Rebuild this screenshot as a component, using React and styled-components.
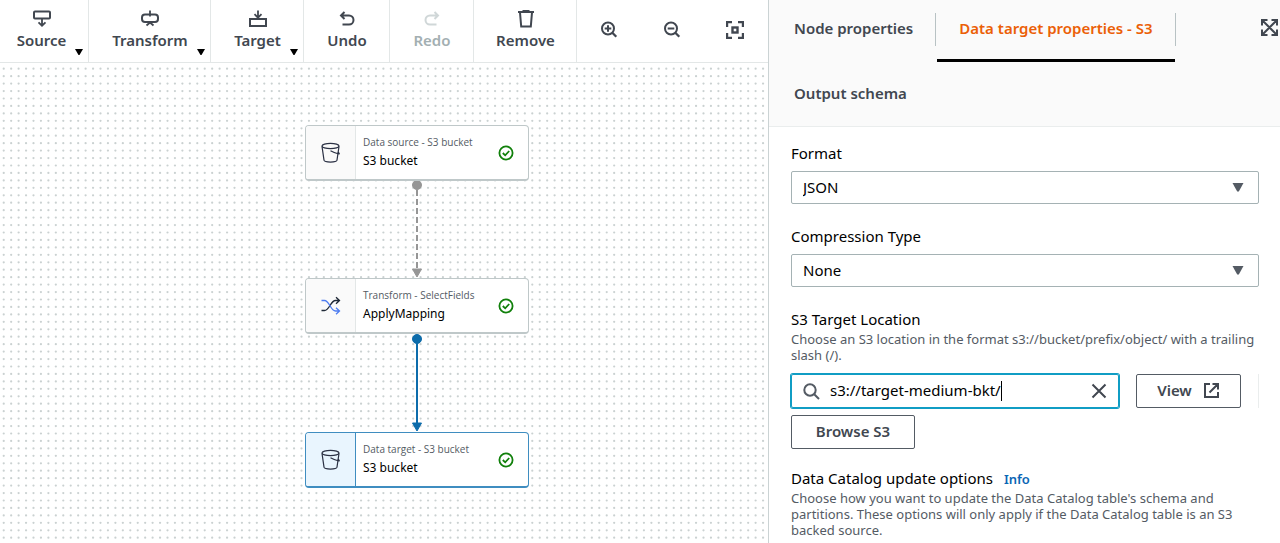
import React from "react";
import styled, { createGlobalStyle, css } from "styled-components";

const GlobalStyle = createGlobalStyle`
  * { box-sizing: border-box; }
  body {
    margin: 0;
    background: #fff;
    color: #16191f;
    font-family: "Noto Sans", "Open Sans", sans-serif;
    font-size: 15px;
    line-height: 20px;
  }
  button, input, select { font: inherit; color: inherit; }
`;

const Page = styled.div`
  display: grid;
  grid-template-columns: 3fr 2fr;
  min-height: 100vh;
`;

/* ---------- Graph side ---------- */

const GraphPane = styled.main`
  display: flex;
  flex-direction: column;
  min-width: 0;
`;

const Toolbar = styled.div`
  display: flex;
  height: 63px;
  border-bottom: 1px solid #e3e7e7;
`;

const ToolButton = styled.button`
  position: relative;
  display: flex;
  flex-direction: column;
  align-items: center;
  gap: 1px;
  width: ${(p) => p.$width}px;
  padding: 9px 0 0 ${(p) => (p.$first ? 0 : 1)}px;
  ${(p) => p.$first && css`padding-right: 5px;`}
  border: 0;
  border-right: 1px solid #e3e7e7;
  background: none;
  color: #414750;
  font-weight: 600;
  &:disabled { color: #a3afb2; }
  &:disabled svg { color: #d0d7d8; }
`;

const MenuCaret = styled.svg`
  position: absolute;
  right: 5px;
  bottom: 7px;
  fill: #000;
`;

const ZoomButton = styled.button`
  display: grid;
  place-items: center;
  width: 63px;
  padding: 0 0 2px;
  border: 0;
  background: none;
  color: #414750;
`;

const Canvas = styled.div`
  position: relative;
  flex: 1;
  overflow: hidden;
`;

const CanvasDrawing = styled.svg`
  position: absolute;
  inset: 0;
  width: 100%;
  height: 100%;
`;

const NodeCard = styled.div`
  position: absolute;
  left: 305px;
  top: ${(p) => p.$top}px;
  display: flex;
  align-items: stretch;
  width: 224px;
  height: 56px;
  overflow: hidden;
  border: 1px solid ${(p) => (p.$selected ? "#3f8dc0" : "#bfc8c9")};
  border-bottom-width: 2px;
  border-radius: 4px;
  background: #fff;
`;

const NodeIcon = styled.div`
  display: grid;
  place-items: center;
  width: 50px;
  border-right: 1px solid ${(p) => (p.$selected ? "#3f8dc0" : "#e3e7e7")};
  background: ${(p) => (p.$selected ? "#e9f5fe" : "#fafafa")};
`;

const NodeText = styled.div`
  display: flex;
  flex: 1;
  flex-direction: column;
  gap: 3px;
  padding: 8px 0 0 7px;
  white-space: nowrap;
`;

const NodeKind = styled.div`
  color: #545b64;
  font-family: "Open Sans", "Noto Sans", sans-serif;
  font-size: 10px;
  line-height: 16px;
`;

const NodeName = styled.div`
  color: #000;
  font-size: 12px;
  line-height: 16px;
`;

const NodeStatus = styled.div`
  display: grid;
  place-items: center;
  padding-right: 14px;
`;

/* ---------- Properties side ---------- */

const PropertiesPane = styled.aside`
  min-width: 0;
  border-left: 1px solid #cbd3d4;
`;

const TabHeader = styled.div`
  display: flex;
  height: 127px;
  border-bottom: 1px solid #eaeded;
  background: #fafafa;
`;

const TabList = styled.div`
  display: flex;
  flex: 1;
  flex-wrap: wrap;
  align-content: flex-start;
  row-gap: 3px;
  padding-left: 3px;
`;

const Tab = styled.button`
  position: relative;
  height: 62px;
  margin-right: 2px;
  padding: 0 22px 3px;
  border: 0;
  border-bottom: 3px solid ${(p) => (p.$active ? "#000" : "transparent")};
  background: none;
  color: ${(p) => (p.$active ? "#eb5f07" : "#414750")};
  font-weight: 600;
  &::after {
    content: "";
    position: absolute;
    top: 13px;
    right: -1px;
    width: ${(p) => (p.$last ? 0 : 1)}px;
    height: 33px;
    background: #b8c2c4;
  }
`;

const ExpandButton = styled.button`
  align-self: flex-start;
  margin-top: 19px;
  padding: 0 2px 0 0;
  border: 0;
  background: none;
  color: #414750;
  line-height: 0;
`;

const Form = styled.form`
  padding: 16px 21px 4px 22px;
`;

const Field = styled.div`
  margin-bottom: ${(p) => p.$gap}px;
`;

const Label = styled.label`
  display: block;
  color: #000;
`;

const LabelRow = styled.div`
  display: flex;
  align-items: baseline;
  gap: 11px;
`;

const InfoLink = styled.a`
  color: #0a66b5;
  font-size: 13px;
  font-weight: 600;
  line-height: 16px;
  text-decoration: none;
`;

const Hint = styled.p`
  margin: 2px 0 0;
  color: #545b64;
  font-size: 13px;
  line-height: 16px;
`;

const SelectBox = styled.div`
  position: relative;
  margin-top: 8px;
  svg {
    position: absolute;
    top: 12px;
    right: 15px;
    fill: #545b64;
    pointer-events: none;
  }
`;

const Select = styled.select`
  display: block;
  width: 100%;
  height: 33px;
  padding: 0 11px 2px;
  appearance: none;
  border: 1px solid #a5b2b4;
  border-radius: 2px;
  background: #fff;
  color: #000;
`;

const LocationRow = styled.div`
  display: flex;
  gap: 17px;
  height: 34px;
  margin: 11px 0 7px;
`;

const SearchBox = styled.div`
  display: flex;
  flex: 1;
  align-items: center;
  min-width: 0;
  padding: 0 11px;
  border: 1px solid #109dc4;
  border-radius: 2px;
  box-shadow: 0 0 0 1px #109dc4;
  color: #545b64;
`;

const SearchInput = styled.input`
  field-sizing: content;
  min-width: 0;
  margin-left: 10px;
  padding: 0 0 2px;
  border: 0;
  outline: 0;
  background: none;
  caret-color: transparent;
  color: #000;
`;

const TextCursor = styled.span`
  width: 1px;
  height: 20px;
  background: #000;
`;

const ClearButton = styled.button`
  margin-left: auto;
  padding: 0;
  border: 0;
  background: none;
  color: #414750;
  line-height: 0;
`;

const OutlineButton = styled.button`
  display: inline-flex;
  align-items: center;
  justify-content: center;
  gap: 11px;
  width: ${(p) => p.$width}px;
  height: 34px;
  padding: 0 0 2px;
  border: 1px solid #545b64;
  border-radius: 2px;
  background: #fff;
  color: #414750;
  font-weight: 600;
`;

const Divider = styled.span`
  width: 1px;
  background: #eaeded;
`;

/* ---------- Icons ---------- */

const ToolIcon = ({ children }) => (
  <svg width="20" height="20" viewBox="0 0 20 20" fill="none" stroke="currentColor" strokeWidth="2">
    {children}
  </svg>
);

const SourceIcon = () => (
  <ToolIcon>
    <rect x="2" y="2.500" width="16" height="7" rx="1" />
    <path d="M10 9.500V16.500M6.500 13.300l3.500 3.400 3.500-3.400" strokeWidth="1.800" />
  </ToolIcon>
);

const TransformIcon = () => (
  <ToolIcon>
    <rect x="2" y="5.500" width="16" height="7.500" rx="3" />
    <path d="M10 1.500v6M10 12.500v2M6.500 16.500l3.500-3 3.500 3" strokeWidth="1.800" />
  </ToolIcon>
);

const TargetIcon = () => (
  <ToolIcon>
    <rect x="2" y="10" width="16" height="7" />
    <path d="M10 1.500v7M6.500 5.200l3.500 3.500 3.500-3.500" strokeWidth="1.800" />
  </ToolIcon>
);

const UndoIcon = () => (
  <ToolIcon>
    <path d="M4.500 6.500H12a4.500 4.500 0 0 1 0 9H5.500M7.500 3L4 6.500 7.500 10" />
  </ToolIcon>
);

const RedoIcon = () => (
  <ToolIcon>
    <path d="M15.500 6.500H8a4.500 4.500 0 0 0 0 9h6.500M12.500 3L16 6.500 12.500 10" />
  </ToolIcon>
);

const TrashIcon = () => (
  <ToolIcon>
    <path d="M2 3h16M6.500 2h7M4 3.500l1.200 14h9.600L16 3.500" />
  </ToolIcon>
);

const MagnifierIcon = ({ plus }) => (
  <svg width="18" height="18" viewBox="0 0 18 18" fill="none" stroke="currentColor" strokeWidth="2">
    <circle cx="8" cy="7.500" r="6" />
    <path d="M12.300 11.800L16.300 15.800" strokeWidth="2.300" />
    <path d={plus ? "M4.700 7.500h6.600M8 4.200v6.600" : "M4.700 7.500h6.600"} />
  </svg>
);

const FitIcon = () => (
  <svg width="18" height="18" viewBox="0 0 18 18" fill="none" stroke="currentColor" strokeWidth="2.400">
    <path d="M1 6V1h5M12 1h5v5M17 12v5h-5M6 17H1v-5" />
    <rect x="6.500" y="6.500" width="5" height="5" />
  </svg>
);

const ExpandIcon = () => (
  <svg width="17" height="17" viewBox="0 0 17 17" fill="none" stroke="currentColor" strokeWidth="2">
    <path d="M1 6.500V1h5.500M10.500 1H16v5.500M16 10.500V16h-5.500M6.500 16H1v-5.500M1.500 1.500l14 14M15.500 1.500l-14 14" />
  </svg>
);

const DownTriangle = () => (
  <svg width="12" height="9" viewBox="0 0 12 9" aria-hidden="true">
    <path d="M0.500 0h11L6.800 8.500h-1.600z" />
  </svg>
);

const SearchIcon = () => (
  <svg width="17" height="17" viewBox="0 0 17 17" fill="none" stroke="currentColor" strokeWidth="2">
    <circle cx="7" cy="7" r="5.700" />
    <path d="M11.200 11.200L16 16" />
  </svg>
);

const CloseIcon = () => (
  <svg width="16" height="16" viewBox="0 0 16 16" fill="none" stroke="currentColor" strokeWidth="2">
    <path d="M1.500 1.500l13 13M14.500 1.500l-13 13" />
  </svg>
);

const ExternalIcon = () => (
  <svg width="17" height="17" viewBox="0 0 17 17" fill="none" stroke="currentColor" strokeWidth="2">
    <path d="M7 2H2v13h13v-5M9.500 2H15v5.500M15 2L6.500 10.500" />
  </svg>
);

const CheckIcon = () => (
  <svg width="16" height="16" viewBox="0 0 16 16" fill="none" stroke="#11800b" strokeWidth="1.800">
    <circle cx="8" cy="8" r="6.600" />
    <path d="M4.800 8l2.400 2.300 4-4.300" />
  </svg>
);

const BucketIcon = () => (
  <svg width="20" height="22" viewBox="0 0 20 22" fill="none" stroke="#2b3144" strokeWidth="1.200">
    <ellipse cx="9.500" cy="4" rx="8.500" ry="2.700" />
    <path d="M1 4.300L3 18.200c.5 2.600 12.500 2.600 13 0L18 4.300" />
    <path d="M9.500 8.800c3 1.600 6 2.900 8.300 3.200 1 0 .2-1-1-1.900" />
  </svg>
);

const ShuffleIcon = () => (
  <svg width="20" height="20" viewBox="0 0 20 20" fill="none" strokeWidth="1.300">
    <path d="M.5 14.500h3c5 0 6-10 11-10H18.500M15 1.300L18.500 4.500 15 7.800" stroke="#1f2937" />
    <path d="M.5 4.500h3c5 0 6 10.500 11 10.500H18.500M15 11.700l3.500 3.300-3.500 3.200" stroke="#4d7cf0" />
  </svg>
);

/* ---------- Data ---------- */

const tools = [
  { label: "Source", Icon: SourceIcon, width: 89, menu: true },
  { label: "Transform", Icon: TransformIcon, width: 122, menu: true },
  { label: "Target", Icon: TargetIcon, width: 93, menu: true },
  { label: "Undo", Icon: UndoIcon, width: 86 },
  { label: "Redo", Icon: RedoIcon, width: 84, disabled: true },
  { label: "Remove", Icon: TrashIcon, width: 103 },
];

const nodes = [
  { kind: "Data source - S3 bucket", name: "S3 bucket", top: 62, Icon: BucketIcon },
  { kind: "Transform - SelectFields", name: "ApplyMapping", top: 215, Icon: ShuffleIcon },
  { kind: "Data target - S3 bucket", name: "S3 bucket", top: 369, Icon: BucketIcon, selected: true },
];

const dotSteps = [0, 1, 2, 3, 4, 5, 6, 7, 8];

const GraphDrawing = () => (
  <CanvasDrawing aria-hidden="true">
    <defs>
      <pattern id="dots" x="0" y="2" width="67" height="67" patternUnits="userSpaceOnUse" viewBox="0 0 90 90">
        {dotSteps.map((row) =>
          dotSteps.map((col) => (
            <circle key={`${row}-${col}`} cx={5 + col * 10} cy={5 + row * 10} r="1.500" fill="#cad1d1" />
          ))
        )}
      </pattern>
    </defs>
    <rect width="100%" height="100%" fill="url(#dots)" />
    <g fill="#969696" stroke="#969696">
      <circle cx="417" cy="122" r="4.500" />
      <path d="M417 127v80" strokeWidth="2" strokeDasharray="6 3" />
      <path d="M412.500 206h9l-4.500 8z" />
    </g>
    <g fill="#0d6cab" stroke="#0d6cab">
      <circle cx="417" cy="276" r="4.500" />
      <path d="M417 276v85" strokeWidth="2" />
      <path d="M412.500 360h9l-4.500 8z" />
    </g>
  </CanvasDrawing>
);

export default function App() {
  return (
    <Page>
      <GlobalStyle />
      <GraphPane>
        <Toolbar>
          {tools.map(({ label, Icon, width, menu, disabled }, i) => (
            <ToolButton key={label} type="button" $width={width} $first={i === 0} disabled={disabled}>
              <Icon />
              {label}
              {menu && (
                <MenuCaret width="8" height="6" viewBox="0 0 8 6">
                  <path d="M0 0h8L4.500 6h-1z" />
                </MenuCaret>
              )}
            </ToolButton>
          ))}
          <ZoomButton type="button" aria-label="Zoom in"><MagnifierIcon plus /></ZoomButton>
          <ZoomButton type="button" aria-label="Zoom out"><MagnifierIcon /></ZoomButton>
          <ZoomButton type="button" aria-label="Fit to screen"><FitIcon /></ZoomButton>
        </Toolbar>
        <Canvas>
          <GraphDrawing />
          {nodes.map(({ kind, name, top, Icon, selected }) => (
            <NodeCard key={kind} $top={top} $selected={selected}>
              <NodeIcon $selected={selected}><Icon /></NodeIcon>
              <NodeText>
                <NodeKind>{kind}</NodeKind>
                <NodeName>{name}</NodeName>
              </NodeText>
              <NodeStatus><CheckIcon /></NodeStatus>
            </NodeCard>
          ))}
        </Canvas>
      </GraphPane>

      <PropertiesPane>
        <TabHeader>
          <TabList role="tablist">
            <Tab type="button" role="tab">Node properties</Tab>
            <Tab type="button" role="tab" aria-selected="true" $active>Data target properties - S3</Tab>
            <Tab type="button" role="tab" $last>Output schema</Tab>
          </TabList>
          <ExpandButton type="button" aria-label="Expand panel"><ExpandIcon /></ExpandButton>
        </TabHeader>
        <Form>
          <Field $gap={22}>
            <Label htmlFor="format">Format</Label>
            <SelectBox>
              <Select id="format" defaultValue="JSON"><option>JSON</option></Select>
              <DownTriangle />
            </SelectBox>
          </Field>
          <Field $gap={22}>
            <Label htmlFor="compression">Compression Type</Label>
            <SelectBox>
              <Select id="compression" defaultValue="None"><option>None</option></Select>
              <DownTriangle />
            </SelectBox>
          </Field>
          <Field $gap={19}>
            <Label htmlFor="location">S3 Target Location</Label>
            <Hint>
              Choose an S3 location in the format s3://bucket/prefix/object/ with a trailing slash (/).
            </Hint>
            <LocationRow>
              <SearchBox>
                <SearchIcon />
                <SearchInput id="location" type="text" defaultValue="s3://target-medium-bkt/" />
                <TextCursor />
                <ClearButton type="button" aria-label="Clear"><CloseIcon /></ClearButton>
              </SearchBox>
              <OutlineButton type="button" $width={105}>View <ExternalIcon /></OutlineButton>
              <Divider />
            </LocationRow>
            <OutlineButton type="button" $width={124}>Browse S3</OutlineButton>
          </Field>
          <Field $gap={0}>
            <LabelRow>
              <Label as="span">Data Catalog update options</Label>
              <InfoLink href="#info">Info</InfoLink>
            </LabelRow>
            <Hint>
              Choose how you want to update the Data Catalog table's schema and partitions. These
              options will only apply if the Data Catalog table is an S3 backed source.
            </Hint>
          </Field>
        </Form>
      </PropertiesPane>
    </Page>
  );
}
